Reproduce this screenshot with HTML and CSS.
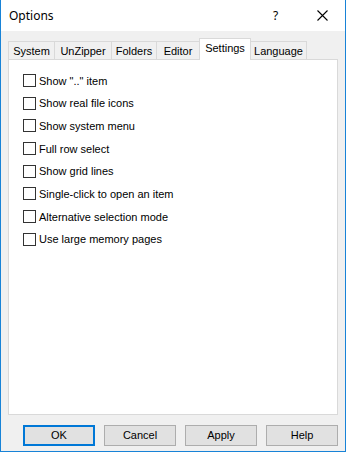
FILE: index.html
```html
<!DOCTYPE html>
<html lang="en">

<head>
    <meta charset="UTF-8">
    <title>Options</title>
    <link rel="stylesheet" href="styles.css">
</head>

<body>
    <div class="ventana">
        <div class="titulo">
            <span class="titulo-texto">Options</span>
            <span class="btn-ayuda">?</span>
            <span class="btn-cerrar">
                <svg width="11" height="11" viewBox="0 0 11 11">
                    <path d="M0.5 0.5 L10.5 10.5 M10.5 0.5 L0.5 10.5" stroke="#000" stroke-width="1.1" fill="none"/>
                </svg>
            </span>
        </div>

        <div class="cuerpo">
            <div class="pestanas">
                <div class="pestana" style="width:46px">System</div>
                <div class="pestana" style="width:57px">UnZipper</div>
                <div class="pestana" style="width:45px">Folders</div>
                <div class="pestana" style="width:43px">Editor</div>
                <div class="pestana activa" style="width:52px">Settings</div>
                <div class="pestana" style="width:56px">Language</div>
            </div>

            <div class="panel">
                <label class="opcion"><span class="check"></span>Show ".." item</label>
                <label class="opcion"><span class="check"></span>Show real file icons</label>
                <label class="opcion"><span class="check"></span>Show system menu</label>
                <label class="opcion"><span class="check"></span>Full row select</label>
                <label class="opcion"><span class="check"></span>Show grid lines</label>
                <label class="opcion"><span class="check"></span>Single-click to open an item</label>
                <label class="opcion"><span class="check"></span>Alternative selection mode</label>
                <label class="opcion"><span class="check"></span>Use large memory pages</label>
            </div>

            <div class="botones">
                <div class="boton defecto">OK</div>
                <div class="boton">Cancel</div>
                <div class="boton">Apply</div>
                <div class="boton">Help</div>
            </div>
        </div>
    </div>
</body>

</html>
```

FILE: styles.css
```css
body {
    margin: 0;
    padding: 0;
    font-family: "Liberation Sans", Arial, sans-serif;
    font-size: 11px;
    color: #000;
}

.ventana {
    width: 346px;
    height: 452px;
    box-sizing: border-box;
    border: 1px solid #1883d7;
    border-top: none;
    background-color: #f0f0f0;
    display: flex;
    flex-direction: column;
}

.titulo {
    height: 31px;
    background-color: #fff;
    display: flex;
    align-items: center;
    position: relative;
}

.titulo-texto {
    margin-left: 8px;
    font-family: "Noto Sans", "Open Sans", sans-serif;
    font-size: 12px;
    margin-top: -1px;
}

.btn-ayuda {
    position: absolute;
    left: 272px;
    top: 7px;
    font-family: "Noto Sans", sans-serif;
    font-size: 12px;
}

.btn-cerrar {
    position: absolute;
    left: 316px;
    top: 10px;
    line-height: 0;
}

.cuerpo {
    flex: 1;
    padding: 7px 7px 0 7px;
    display: flex;
    flex-direction: column;
}

.pestanas {
    display: flex;
    align-items: flex-end;
    height: 21px;
    position: relative;
    z-index: 1;
}

.pestana {
    height: 18px;
    box-sizing: border-box;
    border: 1px solid #d9d9d9;
    border-bottom: none;
    border-right: none;
    background-color: #f0f0f0;
    text-align: center;
    line-height: 18px;
    font-size: 11px;
}

.pestana:nth-child(6) {
    border-right: 1px solid #d9d9d9;
}

.pestana.activa {
    height: 22px;
    margin-bottom: -1px;
    background-color: #fff;
    border-right: 1px solid #d9d9d9;
    line-height: 18px;
    margin-right: -1px;
    position: relative;
}

.pestana.activa + .pestana {
    border-left: none;
    margin-left: 1px;
}

.panel {
    height: 356px;
    box-sizing: border-box;
    border: 1px solid #d9d9d9;
    background-color: #fff;
    padding: 14px 0 0 14px;
}

.opcion {
    display: flex;
    align-items: center;
    height: 13px;
    margin-bottom: 9.7px;
}

.check {
    width: 13px;
    height: 13px;
    box-sizing: border-box;
    border: 1px solid #333;
    background-color: #fff;
    margin-right: 3px;
}

.botones {
    display: flex;
    gap: 9px;
    padding: 10px 0 0 15px;
}

.boton {
    width: 72px;
    height: 21px;
    box-sizing: border-box;
    border: 1px solid #adadad;
    background-color: #e1e1e1;
    text-align: center;
    line-height: 19px;
    font-size: 11px;
}

.boton.defecto {
    border: 2px solid #0078d7;
    line-height: 17px;
}
```
